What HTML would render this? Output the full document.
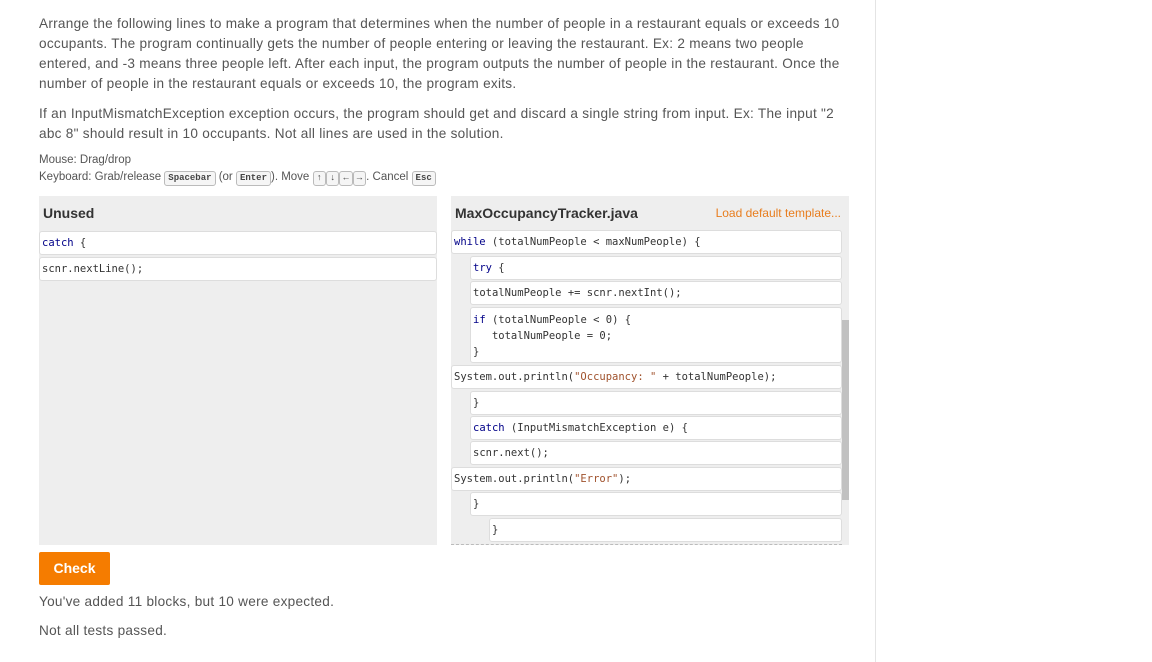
<!DOCTYPE html>
<html><head><style>
body{margin:0;width:1152px;height:662px;background:#fff;font-family:"Liberation Sans",sans-serif;color:#555;position:relative;overflow:hidden}
.vl{position:absolute;left:875px;top:0;width:1px;height:662px;background:#e4e4e4}
p{position:absolute;left:39px;margin:0;font-size:13.6px;line-height:20px;width:805px;color:#555;letter-spacing:0.27px}
.sm{position:absolute;left:39px;font-size:11.5px;color:#555}
.k{display:inline-block;font-family:"Liberation Mono",monospace;font-size:9px;font-weight:bold;border:1px solid #bbb;border-radius:3px;padding:0 3px;line-height:13px;background:#f5f5f5;color:#444}
.panel{position:absolute;top:196px;height:349px;width:398px;background:#eee}
.h{position:absolute;top:9px;left:4px;font-weight:bold;font-size:14px;color:#333}
.b{position:absolute;background:#fff;border:1px solid #ddd;border-radius:3px;font-family:"DejaVu Sans Mono",monospace;font-size:10.5px;color:#333;padding:0 2px;line-height:23px;box-sizing:border-box;height:24px;white-space:pre}
.kw{color:#000088}.st{color:#a0522d}
.btn{position:absolute;left:39px;top:552px;width:71px;height:33px;background:#f57c00;color:#fff;font-weight:bold;font-size:14px;line-height:33px;text-align:center;border-radius:2px}
</style></head><body>
<div class="vl"></div>
<p style="top:14px">Arrange the following lines to make a program that determines when the number of people in a restaurant equals or exceeds 10 occupants. The program continually gets the number of people entering or leaving the restaurant. Ex: 2 means two people entered, and -3 means three people left. After each input, the program outputs the number of people in the restaurant. Once the number of people in the restaurant equals or exceeds 10, the program exits.</p>
<p style="top:104px">If an InputMismatchException exception occurs, the program should get and discard a single string from input. Ex: The input "2 abc 8" should result in 10 occupants. Not all lines are used in the solution.</p>
<div class="sm" style="top:154px">Mouse: Drag/drop</div>
<div class="sm" style="top:171px">Keyboard: Grab/release <span class="k">Spacebar</span> (or <span class="k">Enter</span>). Move <span class="k">↑</span><span class="k">↓</span><span class="k">←</span><span class="k">→</span>. Cancel <span class="k">Esc</span></div>
<div class="panel" style="left:39px"><div class="h">Unused</div>
<div class="b" style="left:0;top:35px;width:398px"><span class="kw">catch</span> {</div>
<div class="b" style="left:0;top:61px;width:398px">scnr.nextLine();</div>
</div>
<div class="panel" style="left:451px"><div class="h">MaxOccupancyTracker.java</div>
<div style="position:absolute;right:8px;top:10px;font-size:12px;color:#e87d1e">Load default template...</div>
<div style="position:absolute;left:391px;top:124px;width:7px;height:180px;background:#c1c1c1"></div>
<div style="position:absolute;left:0;bottom:0;width:391px;border-bottom:1px dashed #bbb"></div>
<div class="b" style="left:0;top:34px;width:391px"><span class="kw">while</span> (totalNumPeople &lt; maxNumPeople) {</div>
<div class="b" style="left:19px;top:60px;width:372px"><span class="kw">try</span> {</div>
<div class="b" style="left:19px;top:85px;width:372px">totalNumPeople += scnr.nextInt();</div>
<div class="b" style="left:19px;top:111px;width:372px;height:56px;line-height:16px;padding-top:4px"><span class="kw">if</span> (totalNumPeople &lt; 0) {
   totalNumPeople = 0;
}</div>
<div class="b" style="left:0;top:169px;width:391px">System.out.println(<span class="st">"Occupancy: "</span> + totalNumPeople);</div>
<div class="b" style="left:19px;top:195px;width:372px">}</div>
<div class="b" style="left:19px;top:220px;width:372px"><span class="kw">catch</span> (InputMismatchException e) {</div>
<div class="b" style="left:19px;top:245px;width:372px">scnr.next();</div>
<div class="b" style="left:0;top:271px;width:391px">System.out.println(<span class="st">"Error"</span>);</div>
<div class="b" style="left:19px;top:296px;width:372px">}</div>
<div class="b" style="left:38px;top:322px;width:353px">}</div>
</div>
<div class="btn">Check</div>
<p style="top:592px">You've added 11 blocks, but 10 were expected.</p>
<p style="top:621px">Not all tests passed.</p>
</body></html>
